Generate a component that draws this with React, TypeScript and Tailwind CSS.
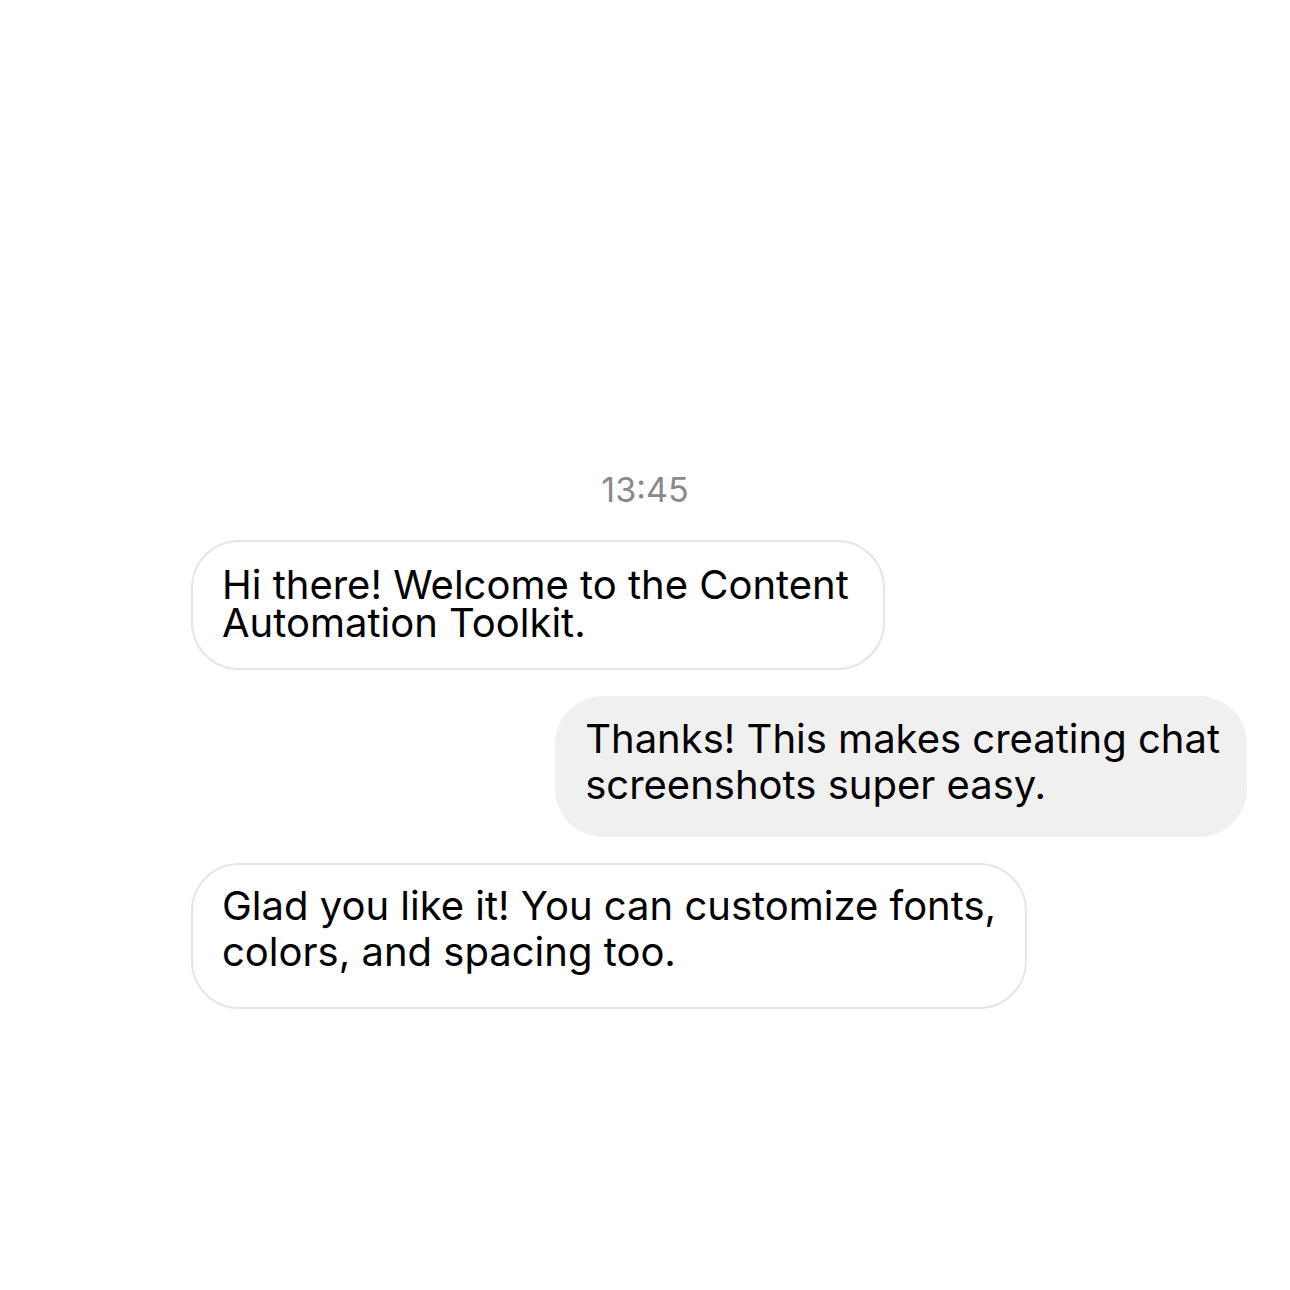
import React from 'react';

type Msg = { id: number; lines: string[]; mine: boolean; tight?: boolean };

const messages: Msg[] = [
  { id: 1, lines: ['Hi there! Welcome to the Content', 'Automation Toolkit.'], mine: false, tight: true },
  { id: 2, lines: ['Thanks! This makes creating chat', 'screenshots super easy.'], mine: true },
  { id: 3, lines: ['Glad you like it! You can customize fonts,', 'colors, and spacing too.'], mine: false },
];

const Lines: React.FC<{ lines: string[] }> = ({ lines }) => (
  <>
    {lines.map((l, i) => (
      <div key={i} className="whitespace-nowrap">
        {l}
      </div>
    ))}
  </>
);

const Bubble: React.FC<{ msg: Msg }> = ({ msg }) => {
  if (msg.mine) {
    return (
      <div className="flex justify-end">
        <div className="rounded-[48px] bg-[#f0f0f0] pl-[30px] pr-[27px] pt-[20px] pb-[29px] text-[40px] leading-[46px] text-black">
          <Lines lines={msg.lines} />
        </div>
      </div>
    );
  }
  return (
    <div className="flex justify-start">
      <div
        className={
          msg.tight
            ? 'rounded-[48px] border-2 border-[#e5e5e5] bg-white pl-[29px] pr-[34px] pt-[24px] pb-[26px] text-[40px] leading-[38px] text-black'
            : 'rounded-[48px] border-2 border-[#e5e5e5] bg-white px-[29px] pt-[18px] pb-[32px] text-[40px] leading-[46px] text-black'
        }
      >
        <Lines lines={msg.lines} />
      </div>
    </div>
  );
};

const App: React.FC = () => {
  return (
    <div className="min-h-[1290px] w-full bg-white font-['Inter',sans-serif] pt-[470px] pl-[191px] pr-[43px]">
      <div className="text-center text-[34px] text-[#8a8a8a] leading-[40px] -ml-[191px] -mr-[43px]">13:45</div>
      <div className="mt-[30px] flex flex-col gap-[26px]">
        {messages.map((m) => (
          <Bubble key={m.id} msg={m} />
        ))}
      </div>
    </div>
  );
};

export default App;
